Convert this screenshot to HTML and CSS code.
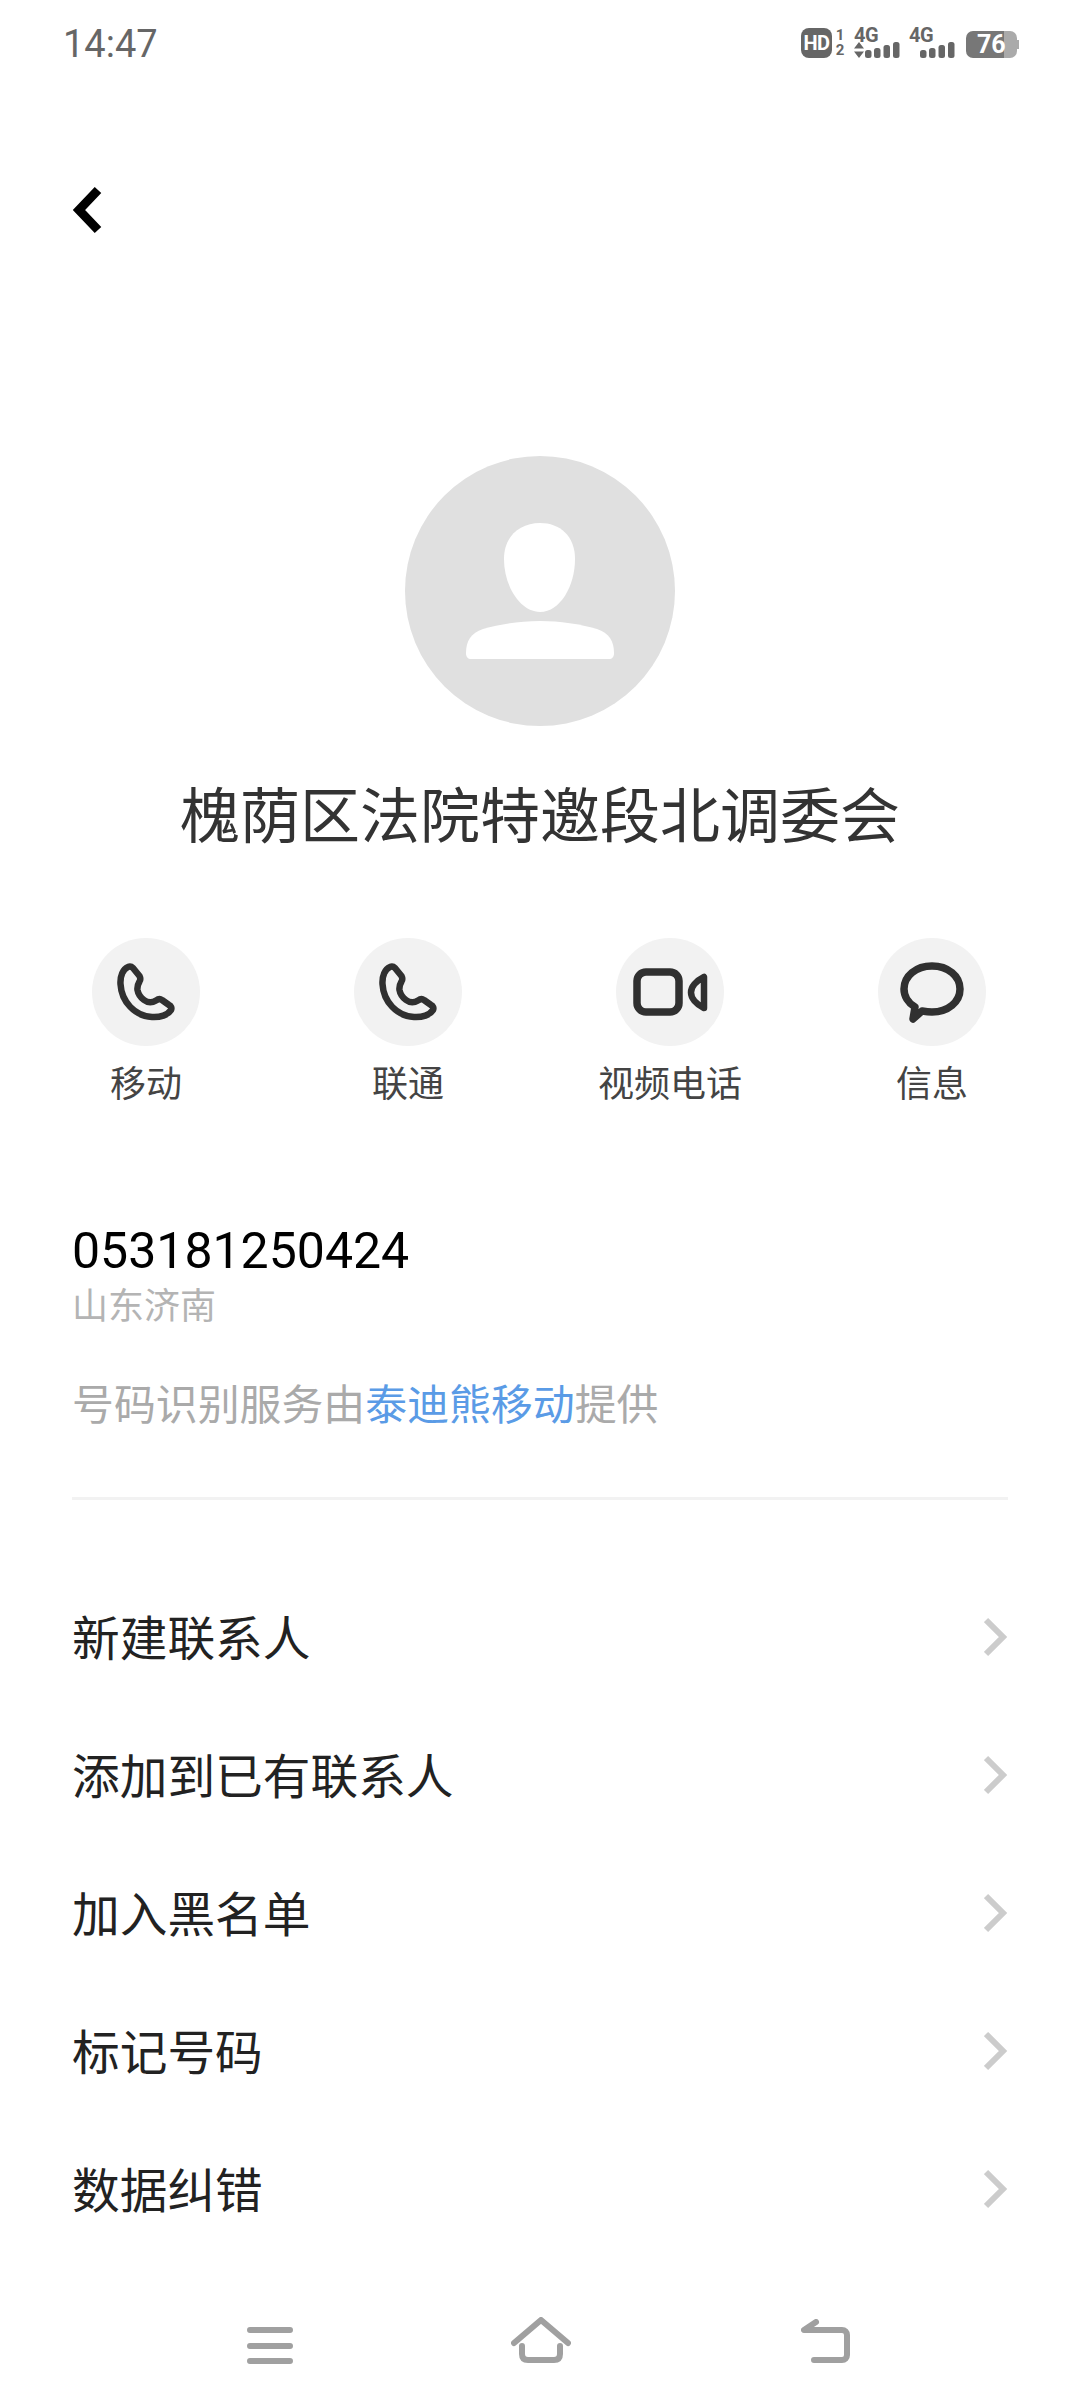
FILE: index.html
```html
<!DOCTYPE html>
<html lang="zh-CN">
<head>
  <meta charset="UTF-8">
  <meta name="viewport" content="width=device-width, initial-scale=1.0">
  <title>号码详情</title>
  <link rel="stylesheet" href="styles.css">
</head>
<body>
  <div class="page">
    <header class="status-bar">
      <span class="time">14:47</span>
      <div class="status-icons">
        <span class="hd">HD</span>
        <span class="sim"><span>1</span><span>2</span></span>
        <div class="signal">
          <span class="net">4G</span>
          <svg width="46" height="16" viewBox="0 0 46 16">
            <path class="sig-arrow" d="M5 0l5 6.500H0zM5 16l5-6.500H0z"/>
            <rect class="sig-bar" x="11" y="8" width="6.500" height="8" rx="2.500"/>
            <rect class="sig-bar" x="20" y="6" width="6.500" height="10" rx="2.500"/>
            <rect class="sig-bar" x="29.500" y="3" width="6.500" height="13" rx="2.500"/>
            <rect class="sig-bar" x="39" y="0" width="6.500" height="16" rx="2.500"/>
          </svg>
        </div>
        <div class="signal">
          <span class="net">4G</span>
          <svg width="46" height="16" viewBox="0 0 46 16">
            <rect class="sig-bar" x="11" y="8" width="6.500" height="8" rx="2.500"/>
            <rect class="sig-bar" x="20" y="6" width="6.500" height="10" rx="2.500"/>
            <rect class="sig-bar" x="29.500" y="3" width="6.500" height="13" rx="2.500"/>
            <rect class="sig-bar" x="39" y="0" width="6.500" height="16" rx="2.500"/>
          </svg>
        </div>
        <div class="battery"><span class="battery-level">76</span></div>
      </div>
    </header>

    <a class="back">
      <svg width="40" height="60" viewBox="0 0 40 60">
        <path d="M26 10L7 30l19 20" fill="none" stroke="#000" stroke-width="9"/>
      </svg>
    </a>

    <section class="profile">
      <svg class="avatar" width="270" height="270" viewBox="0 0 270 270">
        <circle cx="135" cy="135" r="135" fill="#e0e0e0"/>
        <path fill="#fff" d="M135 67C155 67 170 80 170 103C170 130 155 156 135 156C115 156 99 130 99 103C99 80 115 67 135 67Z"/>
        <path fill="#fff" d="M135 165C155 165 175 168 192 173C204 177 209 185 209 197C209 201 207 203 204 203L66 203C63 203 61 201 61 197C61 185 66 177 78 173C95 168 115 165 135 165Z"/>
      </svg>
      <h1 class="name">槐荫区法院特邀段北调委会</h1>
    </section>

    <section class="actions">
      <div class="action">
        <svg class="action-icon" width="108" height="108" viewBox="0 0 108 108">
          <circle cx="54" cy="54" r="54" fill="#f2f2f2"/>
          <path class="glyph" d="M36 29C31 31 28 38 28.500 46C29.500 64 43 78 60 79C68 79.500 76 77 79 72C80 70 79 68 77 67L70 62C68 60.500 66 61 64 62.500C60 65 56 65 52 62C48 59 46 55 45.500 52C45 48 46 46 47.500 43.500C48.500 42 48.500 40 47.500 38L41 30C39.500 28.500 38 28 36 29Z"/>
        </svg>
        <span class="action-label">移动</span>
      </div>
      <div class="action">
        <svg class="action-icon" width="108" height="108" viewBox="0 0 108 108">
          <circle cx="54" cy="54" r="54" fill="#f2f2f2"/>
          <path class="glyph" d="M36 29C31 31 28 38 28.500 46C29.500 64 43 78 60 79C68 79.500 76 77 79 72C80 70 79 68 77 67L70 62C68 60.500 66 61 64 62.500C60 65 56 65 52 62C48 59 46 55 45.500 52C45 48 46 46 47.500 43.500C48.500 42 48.500 40 47.500 38L41 30C39.500 28.500 38 28 36 29Z"/>
        </svg>
        <span class="action-label">联通</span>
      </div>
      <div class="action">
        <svg class="action-icon" width="108" height="108" viewBox="0 0 108 108">
          <circle cx="54" cy="54" r="54" fill="#f2f2f2"/>
          <rect class="glyph glyph-thick" x="21" y="34" width="42" height="40" rx="9"/>
          <path class="glyph" d="M88 39V70C80 66 75 60 75 54.500C75 49 80 43 88 39Z"/>
        </svg>
        <span class="action-label">视频电话</span>
      </div>
      <div class="action">
        <svg class="action-icon" width="108" height="108" viewBox="0 0 108 108">
          <circle cx="54" cy="54" r="54" fill="#f2f2f2"/>
          <path class="glyph glyph-thick" d="M54 28C70 28 82 38 82 51C82 64 70 74 54 74C50 74 47 73.500 44 73L35 81L37 69C30 65 26 58 26 51C26 38 38 28 54 28Z"/>
        </svg>
        <span class="action-label">信息</span>
      </div>
    </section>

    <section class="number-info">
      <div class="number">053181250424</div>
      <div class="location">山东济南</div>
      <p class="provider">号码识别服务由<span class="provider-link">泰迪熊移动</span>提供</p>
    </section>

    <hr class="divider">

    <ul class="menu">
      <li class="menu-row">
        <span class="menu-text">新建联系人</span>
        <svg class="chevron" width="24" height="40" viewBox="0 0 24 40"><path d="M2 3l17 17L2 37"/></svg>
      </li>
      <li class="menu-row">
        <span class="menu-text">添加到已有联系人</span>
        <svg class="chevron" width="24" height="40" viewBox="0 0 24 40"><path d="M2 3l17 17L2 37"/></svg>
      </li>
      <li class="menu-row">
        <span class="menu-text">加入黑名单</span>
        <svg class="chevron" width="24" height="40" viewBox="0 0 24 40"><path d="M2 3l17 17L2 37"/></svg>
      </li>
      <li class="menu-row">
        <span class="menu-text">标记号码</span>
        <svg class="chevron" width="24" height="40" viewBox="0 0 24 40"><path d="M2 3l17 17L2 37"/></svg>
      </li>
      <li class="menu-row">
        <span class="menu-text">数据纠错</span>
        <svg class="chevron" width="24" height="40" viewBox="0 0 24 40"><path d="M2 3l17 17L2 37"/></svg>
      </li>
    </ul>

    <nav class="nav-bar">
      <svg class="nav-menu" width="46" height="38" viewBox="0 0 46 38">
        <path d="M3 3H43M3 19H43M3 34H43"/>
      </svg>
      <svg class="nav-home" width="60" height="46" viewBox="0 0 60 46">
        <path d="M3 26L30 3L57 26"/>
        <path d="M11 29V37C11 41 13 43 17 43H43C47 43 49 41 49 37V29"/>
      </svg>
      <svg class="nav-back" width="50" height="44" viewBox="0 0 50 44">
        <path d="M15 3L3 11H41C44 11 46 13 46 16V36C46 39 44 41 41 41H13"/>
      </svg>
    </nav>
  </div>
</body>
</html>
```

FILE: styles.css
```css
* {
  box-sizing: border-box;
}

body {
  margin: 0;
  background-color: #fff;
  font-family: "Noto Sans CJK SC", Roboto, sans-serif;
}

.page {
  width: 1080px;
  height: 2408px;
  display: flex;
  flex-direction: column;
  overflow: hidden;
}

/* status bar */
.status-bar {
  height: 86px;
  padding: 0 63px 0 63px;
  display: flex;
  align-items: center;
  justify-content: space-between;
}

.time {
  margin-top: 2px;
  font-family: Roboto, sans-serif;
  font-size: 38px;
  color: #666;
}

.status-icons {
  display: flex;
  align-items: flex-end;
  height: 30px;
  color: #666;
  font-family: Roboto, sans-serif;
  font-weight: 700;
}

.hd {
  width: 31px;
  height: 30px;
  border-radius: 8px;
  background-color: #666;
  color: #fff;
  font-size: 20px;
  line-height: 30px;
  text-align: center;
  letter-spacing: -0.5px;
}

.sim {
  margin-left: 3px;
  width: 10px;
  display: flex;
  flex-direction: column;
  align-items: center;
  font-size: 15px;
  line-height: 15px;
}

.signal {
  width: 46px;
  margin-left: 9px;
  display: flex;
  flex-direction: column;
}

.signal svg {
  display: block;
}

.net {
  font-size: 20px;
  line-height: 14px;
  letter-spacing: -0.5px;
}

.sig-bar,
.sig-arrow {
  fill: #666;
}

.battery {
  position: relative;
  width: 51px;
  height: 27px;
  margin-left: 11px;
  border-radius: 7px;
  background: linear-gradient(to right, #777 0, #777 38px, #aaa 38px);
}

.battery::after {
  content: "";
  position: absolute;
  right: -2px;
  top: 9px;
  width: 2px;
  height: 9px;
  background-color: #aaa;
}

.battery-level {
  display: block;
  padding-left: 11px;
  color: #fff;
  font-size: 25px;
  line-height: 27px;
}

/* back */
.back {
  display: block;
  margin: 94px 0 0 72px;
  height: 60px;
}

/* avatar and name */
.profile {
  margin-top: 216px;
  display: flex;
  flex-direction: column;
  align-items: center;
}

.avatar {
  display: block;
}

.name {
  margin: 46px 0 0;
  font-size: 60px;
  font-weight: 400;
  line-height: 80px;
  color: #333;
}

/* action buttons */
.actions {
  margin-top: 86px;
  padding-left: 15px;
  display: grid;
  grid-template-columns: repeat(4, 262px);
}

.action {
  display: flex;
  flex-direction: column;
  align-items: center;
}

.action-icon {
  display: block;
}

.action-label {
  margin-top: 10px;
  font-size: 36px;
  line-height: 50px;
  color: #444;
}

.glyph {
  fill: none;
  stroke: #303030;
  stroke-width: 6.5;
  stroke-linejoin: round;
}

.glyph-thick {
  stroke-width: 7.5;
}

/* number block */
.number-info {
  margin-top: 115px;
  padding: 0 72px;
}

.number {
  font-family: Roboto, sans-serif;
  font-size: 50px;
  line-height: 60px;
  color: #000;
}

.location {
  margin-top: 2px;
  font-size: 36px;
  line-height: 40px;
  color: #b4b4b4;
}

.provider {
  margin: 49px 0 0;
  font-size: 41.9px;
  line-height: 60px;
  color: #aaa;
}

.provider-link {
  color: #5a9be6;
}

.divider {
  margin: 65px 72px 0;
  height: 3px;
  border: none;
  background-color: #f2f2f2;
}

/* menu rows */
.menu {
  list-style: none;
  margin: 68px 0 0;
  padding: 0 72px;
}

.menu-row {
  height: 138px;
  display: flex;
  align-items: center;
  justify-content: space-between;
  font-size: 47.7px;
  color: #222;
}

.menu-text {
  padding-bottom: 4px;
}

.chevron {
  fill: none;
  stroke: #ccc;
  stroke-width: 6;
}

/* system nav */
.nav-bar {
  margin-top: auto;
  height: 150px;
  padding: 69px 0 0 247px;
  display: flex;
  align-items: flex-start;
}

.nav-bar svg {
  fill: none;
  stroke: #a0a0a0;
  stroke-width: 6;
  stroke-linecap: round;
  stroke-linejoin: round;
}

.nav-home {
  margin-left: 218px;
  margin-top: -10px;
}

.nav-back {
  margin-left: 230px;
  margin-top: -8px;
}
```
